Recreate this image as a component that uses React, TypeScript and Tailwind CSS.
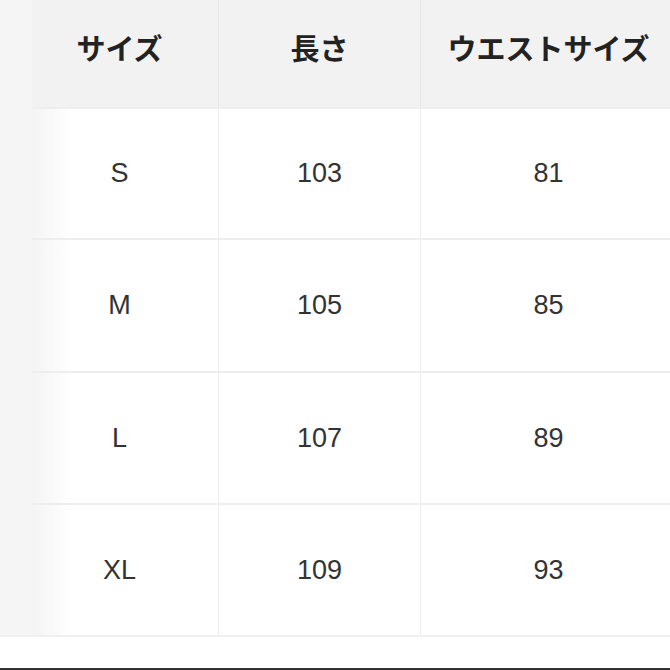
import React from "react";

const rows = [
  { s: "S", l: "103", w: "81", h: "h-[131px]" },
  { s: "M", l: "105", w: "85", h: "h-[133px]" },
  { s: "L", l: "107", w: "89", h: "h-[132px]" },
  { s: "XL", l: "109", w: "93", h: "h-[132px]" },
];

export default function App() {
  return (
    <div className="w-[670px] h-[670px] bg-white flex flex-col overflow-hidden">
      <div className="h-[635px] flex">
        <div className="w-[32px] bg-[#f5f5f5]" />
        <div className="flex-1 flex flex-col">
          <div
            className="h-[107px] grid grid-cols-[187px_202px_249px] bg-[#f2f2f2] text-[#222] text-[29px] font-bold"
            style={{ fontFamily: '"Noto Sans CJK JP", "Noto Sans", sans-serif' }}
          >
            <div className="flex items-center justify-center pb-[12px] pr-[11px] border-r border-[#e6e6e6]">サイズ</div>
            <div className="flex items-center justify-center pb-[12px] border-r border-[#e6e6e6]">長さ</div>
            <div className="flex items-center justify-center pb-[12px] pl-[6px]">ウエストサイズ</div>
          </div>
          {rows.map((r) => (
            <div
              key={r.s}
              className={`${r.h} grid grid-cols-[187px_202px_249px] border-t-2 border-[#eeeeee] text-[#333] text-[27px]`}
              style={{ fontFamily: '"Liberation Sans", Arial, sans-serif' }}
            >
              <div className="flex items-center justify-center pr-[11px] border-r border-[#ececec] bg-[linear-gradient(to_right,#f4f4f4,#ffffff_40px)]">
                {r.s}
              </div>
              <div className="flex items-center justify-center border-r border-[#ececec]">{r.l}</div>
              <div className="flex items-center justify-center pl-[6px]">{r.w}</div>
            </div>
          ))}
        </div>
      </div>
      <div className="flex-1 border-t-2 border-[#f0f0f0]" />
      <div className="h-[2px] bg-[#333]" />
    </div>
  );
}
